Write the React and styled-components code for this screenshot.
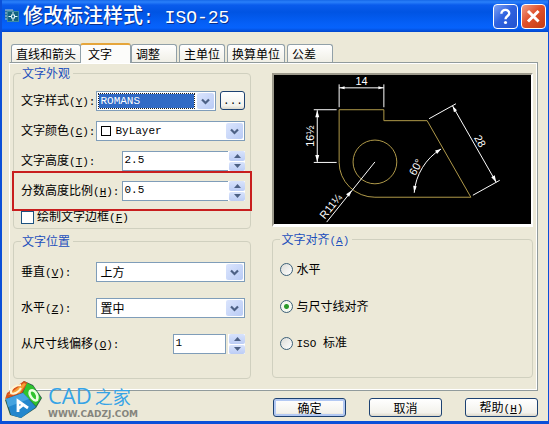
import React, { useState } from 'react'
import styled, { createGlobalStyle, css } from 'styled-components'

const tabs = ['直线和箭头', '文字', '调整', '主单位', '换算单位', '公差']

function App() {
  const [activeTab, setActiveTab] = useState('文字');
  const [style, setStyle] = useState('ROMANS');
  const [color, setColor] = useState('ByLayer');
  const [height, setHeight] = useState('2.5');
  const [fraction, setFraction] = useState('0.5');
  const [frame, setFrame] = useState(false);
  const [vertical, setVertical] = useState('上方');
  const [horizontal, setHorizontal] = useState('置中');
  const [offset, setOffset] = useState('1');
  const [align, setAlign] = useState('line');

  return (
    <>
      <GlobalStyle />
      <Dialog>
        <TitleBar>
          <AppIcon />
          <Title>修改标注样式<TitleLatin>: ISO-25</TitleLatin></Title>
          <CaptionButton aria-label="?">
            <svg width="25" height="25" viewBox="0 0 25 25">
              <path d="M8 9.5C8 3.800 17 4 16.500 9.500C16.200 12 12.500 12 12.500 15.500" fill="none" stroke="#fff" strokeWidth="2.600" />
              <circle cx="12.500" cy="19" r="1.700" fill="#fff" />
            </svg>
          </CaptionButton>
          <CaptionButton $close aria-label="×">
            <svg width="25" height="25" viewBox="0 0 25 25">
              <path d="M6.500 6.500L18 18M18 6.500L6.500 18" stroke="#fff" strokeWidth="3.200" />
            </svg>
          </CaptionButton>
        </TitleBar>

        <Body>
          <TabList role="tablist">
            {tabs.map((tab) => (
              <Tab
                key={tab}
                role="tab"
                aria-selected={tab === activeTab}
                $active={tab === activeTab}
                onClick={() => setActiveTab(tab)}
              >
                {tab}
              </Tab>
            ))}
          </TabList>

          <Panel role="tabpanel">
            <LeftColumn>
              <Group>
                <Legend>文字外观</Legend>
                <AppearanceRows>
                  <Row>
                    <FieldLabel htmlFor="style">文字样式<Key k="Y" /></FieldLabel>
                    <StyleFields>
                      <Combo id="style" value={style} options={['ROMANS', 'Standard']} onChange={setStyle} latin selected />
                      <MoreButton>...</MoreButton>
                    </StyleFields>
                  </Row>
                  <Row>
                    <FieldLabel htmlFor="color">文字颜色<Key k="C" /></FieldLabel>
                    <WideField>
                      <Combo id="color" value={color} options={['ByLayer', 'ByBlock']} onChange={setColor} latin swatch />
                    </WideField>
                  </Row>
                  <Row>
                    <FieldLabel htmlFor="height">文字高度<Key k="T" /></FieldLabel>
                    <NumberField>
                      <Spinner id="height" value={height} onChange={setHeight} />
                    </NumberField>
                  </Row>
                  <Row>
                    <FieldLabel htmlFor="fraction">分数高度比例<Key k="H" /></FieldLabel>
                    <NumberField>
                      <Spinner id="fraction" value={fraction} onChange={setFraction} />
                    </NumberField>
                    <Highlight />
                  </Row>
                  <CheckLabel>
                    <CheckBox type="checkbox" checked={frame} onChange={(e) => setFrame(e.target.checked)} />
                    <span>绘制文字边框<Key k="F" plain /></span>
                  </CheckLabel>
                </AppearanceRows>
              </Group>

              <Group>
                <Legend>文字位置</Legend>
                <PlacementRows>
                  <Row>
                    <FieldLabel htmlFor="vertical">垂直<Key k="V" /></FieldLabel>
                    <WideField>
                      <Combo id="vertical" value={vertical} options={['上方', '置中', '外部']} onChange={setVertical} />
                    </WideField>
                  </Row>
                  <Row>
                    <FieldLabel htmlFor="horizontal">水平<Key k="Z" /></FieldLabel>
                    <WideField>
                      <Combo id="horizontal" value={horizontal} options={['置中', '第一条尺寸界线']} onChange={setHorizontal} />
                    </WideField>
                  </Row>
                  <Row>
                    <FieldLabel htmlFor="offset">从尺寸线偏移<Key k="O" /></FieldLabel>
                    <OffsetField>
                      <Spinner id="offset" value={offset} onChange={setOffset} boxed />
                    </OffsetField>
                  </Row>
                </PlacementRows>
              </Group>
            </LeftColumn>

            <RightColumn>
              <Preview>
                <Drawing />
              </Preview>
              <Group>
                <Legend>文字对齐<Key k="A" plain /></Legend>
                <AlignRows>
                  <RadioLabel>
                    <Radio type="radio" name="align" checked={align === 'horizontal'} onChange={() => setAlign('horizontal')} />
                    水平
                  </RadioLabel>
                  <RadioLabel>
                    <Radio type="radio" name="align" checked={align === 'line'} onChange={() => setAlign('line')} />
                    与尺寸线对齐
                  </RadioLabel>
                  <RadioLabel>
                    <Radio type="radio" name="align" checked={align === 'iso'} onChange={() => setAlign('iso')} />
                    <span><Latin>ISO </Latin>标准</span>
                  </RadioLabel>
                </AlignRows>
              </Group>
            </RightColumn>
          </Panel>

          <Footer>
            <PushButton $primary>确定</PushButton>
            <PushButton>取消</PushButton>
            <PushButton>帮助<Key k="H" plain /></PushButton>
          </Footer>
          <Watermark>
            <CubeLogo />
            <div>
              <Brand>CAD<BrandHan>之家</BrandHan></Brand>
              <BrandUrl>WWW.CADZJ.COM</BrandUrl>
            </div>
          </Watermark>
        </Body>
      </Dialog>
    </>
  )
}

function Key({ k, plain }) {
  return <Latin>(<u>{k}</u>){plain ? '' : ':'}</Latin>
}

function Combo({ id, value, options, onChange, latin, selected, swatch }) {
  return (
    <ComboBox>
      {swatch && <Swatch />}
      <Select id={id} value={value} onChange={(e) => onChange(e.target.value)} $latin={latin} $selected={selected}>
        {options.map((option) => <option key={option}>{option}</option>)}
      </Select>
      <DropArrow>
        <svg width="9" height="7" viewBox="0 0 9 7">
          <path d="M1 1.500L4.500 5L8 1.500" fill="none" stroke="#4d6185" strokeWidth="2.200" />
        </svg>
      </DropArrow>
    </ComboBox>
  )
}

function Spinner({ id, value, onChange, boxed }) {
  const step = (delta) => onChange(String(Number((Number(value) + delta).toFixed(1))));
  return (
    <>
      <NumberInput id={id} value={value} onChange={(e) => onChange(e.target.value)} $boxed={boxed} />
      <Arrows>
        <ArrowButton aria-label="+" onClick={() => step(0.5)}>
          <svg width="7" height="4" viewBox="0 0 7 4"><path d="M0 4L3.500 0L7 4Z" fill="#4d6185" /></svg>
        </ArrowButton>
        <ArrowButton aria-label="-" onClick={() => step(-0.5)}>
          <svg width="7" height="4" viewBox="0 0 7 4"><path d="M0 0L3.500 4L7 0Z" fill="#4d6185" /></svg>
        </ArrowButton>
      </Arrows>
    </>
  )
}

function AppIcon() {
  return (
    <svg width="16" height="16" viewBox="0 0 16 16">
      <path d="M1 2H10V4H3V11H1Z" fill="#2f6f9c" />
      <path d="M1 2H9M1 5H3M1 8H3M1 11H3" stroke="#a9cbd8" />
      <rect x="3.500" y="3.500" width="11" height="10" fill="#14637f" stroke="#3c8ba4" />
      <path d="M9 4V13M4.500 8.500H13.500" stroke="#e8f7fa" />
      <rect x="7.500" y="7" width="3" height="3" fill="#14637f" stroke="#d5eef4" />
    </svg>
  )
}

// sample part with its dimensions
function Drawing() {
  return (
    <DrawingSvg viewBox="0 0 258 149">
      <g fill="none" stroke="#b09a4a">
        <path d="M65.500 87.500V34.500H110.500V45.500H154L198 122.500H101.500A36 35 0 0 1 65.500 87.500Z" />
        <circle cx="101.500" cy="87" r="22" />
      </g>
      <g fill="none" stroke="#fff">
        <path d="M65.500 9V32M110.500 9V32M65.500 12.500H110.500" />
        <path d="M40 34.500H63M40 87.500H63M43.500 35V87" />
        <path d="M156 43.500L183 28.500M200 120.500L227 105.500M179.500 30.500L223.500 107.500" />
        <path d="M141 118A57 57 0 0 1 168 74" />
        <path d="M101.500 87L53 147.500" />
      </g>
      <g fill="#fff">
        <path d="M66 12.500L71 11V14ZM110 12.500L105 11V14Z" />
        <path d="M43.500 35L41.500 42H45.500ZM43.500 87L41.500 80H45.500Z" />
        <path d="M179.500 30.500L181 37L184 35ZM223.500 107.500L218.500 102.500L222 100.500Z" />
        <path d="M141 118L140 111L143.500 111.500ZM168 74L162 75.500L164 79Z" />
        <path d="M78.500 115.500L75.500 122L72.500 119.500Z" />
      </g>
      <g fill="#fff" textAnchor="middle">
        <text x="88" y="9.500">14</text>
        <text transform="translate(40 61) rotate(-90)">16½</text>
        <text transform="translate(204 68) rotate(60)">28</text>
        <text transform="translate(146 94) rotate(-62)">60°</text>
        <text transform="translate(60 134) rotate(-51)">R11¼</text>
      </g>
    </DrawingSvg>
  )
}

function CubeLogo() {
  return (
    <svg width="37" height="38" viewBox="0 0 37 38">
      <path d="M0 19L19 0L28 4L37 17L31 27L16 37L5 34Z" fill="#2c5a4a" />
      <path d="M0 18L2 12L19 0L23 2L17 12Z" fill="#d9531c" />
      <path d="M3 14L19 2L21 3L15 12Z" fill="#f6a035" />
      <path d="M16 4C10 4 5 8 6 12C9 14 14 11 16 7" fill="none" stroke="#fff3d0" strokeWidth="2" />
      <path d="M22 2L28 5L36 17L31 25L18 12Z" fill="#2fc32e" />
      <path d="M25 10C29 7 34 14 32 19C29 21 23 14 25 10Z" fill="none" stroke="#e9ffdf" strokeWidth="2.500" />
      <path d="M1 18L18 12L31 26L16 37L6 34Z" fill="#2487cd" />
      <path d="M1 18L18 12L24 18L3 26Z" fill="#46a4e0" />
      <path d="M13 31L13 20L23 27M13 28L18 24" fill="none" stroke="#fff" strokeWidth="2.800" />
    </svg>
  )
}

const GlobalStyle = createGlobalStyle`
  * {
    box-sizing: border-box;
  }

  body {
    margin: 0;
    background: #ece9d8;
    color: #000;
    font: 12px/14px "Noto Sans CJK SC", sans-serif;
  }

  button, input, select {
    font: inherit;
    color: inherit;
  }

  button {
    cursor: pointer;
  }
`

const Dialog = styled.div`
  background: #ece9d8;
  border: solid #0b4fd8;
  border-width: 0 1px 3px 2px;
`

const TitleBar = styled.header`
  height: 32px;
  display: flex;
  align-items: center;
  gap: 3px;
  padding: 0 2px;
  background: linear-gradient(#1668e8 0, #2a80fa 2px, #0a5cec 5px, #0054e3 12px, #0560f8 24px, #0662fc 28px, #0046cc 32px);
`

const Title = styled.h1`
  flex: 1;
  margin: 0;
  color: #fff;
  font-size: 20px;
  font-weight: 500;
  line-height: 24px;
  white-space: pre;
  text-shadow: 1px 1px #0a2f8c;
`

const TitleLatin = styled.span`
  font-family: "Liberation Mono", monospace;
  font-size: 18px;
`

const CaptionButton = styled.button`
  width: 25px;
  height: 25px;
  padding: 0;
  border: 1px solid #fff;
  border-radius: 4px;
  background: linear-gradient(135deg, #7fa2f4, #2f62e0 45%, #2253cf);
  display: flex;
  align-items: center;
  justify-content: center;

  ${(props) => props.$close && css`
    background: linear-gradient(135deg, #f0a08a, #e0512c 45%, #c33c14);
  `}
`

const Body = styled.main`
  position: relative;
  padding: 11px 10px 4px 7px;
`

const TabList = styled.div`
  position: relative;
  display: flex;
  align-items: flex-end;
  gap: 2px;
  height: 20px;
  margin-bottom: -1px;
  padding-left: 2px;
`

const Tab = styled.button`
  min-width: 46px;
  height: 18px;
  margin-bottom: 1px;
  padding: 0 4px;
  border: 1px solid #91a0a8;
  border-bottom: 0;
  border-radius: 3px 3px 0 0;
  background: linear-gradient(#fff, #f0efe6);
  line-height: 17px;
  text-align: left;
  white-space: nowrap;

  ${(props) => props.$active && css`
    min-width: 51px;
    height: 20px;
    margin: 0 -2px 0 -3px;
    padding: 0 7px 2px;
    border-top: 2px solid #e5a53a;
    background: #fcfcfa;
  `}
`

const Panel = styled.section`
  display: grid;
  grid-template-columns: 238fr 260fr;
  gap: 21px;
  padding: 3px 4px 11px 3px;
  border: 1px solid #919b9c;
  border-left-color: #fff;
  box-shadow: inset 0 1px #fff, inset -1px -1px #fff;
`

const LeftColumn = styled.div`
  display: flex;
  flex-direction: column;
  gap: 5px;
`

const RightColumn = styled(LeftColumn)`
  padding-top: 7px;
`

const Group = styled.fieldset`
  min-width: 0;
  margin: 0;
  padding: 0 5px 0 7px;
  border: 1px solid #d0d0bf;
  border-radius: 4px;
`

const Legend = styled.legend`
  height: 14px;
  padding: 0 3px 0 1px;
  color: #1c4fbc;
`

const Rows = styled.div`
  display: flex;
  flex-direction: column;
`

const AppearanceRows = styled(Rows)`
  gap: 10px;
  padding: 11px 0 5px;
`

const PlacementRows = styled(Rows)`
  gap: 16px;
  padding: 14px 0 24px;
`

const AlignRows = styled(Rows)`
  gap: 17px;
  padding: 13px 0 24px;
`

const Row = styled.div`
  position: relative;
  display: flex;
  align-items: center;
  justify-content: space-between;
  height: 20px;
`

const FieldLabel = styled.label`
  white-space: nowrap;
`

const Latin = styled.span`
  font-family: "Liberation Mono", monospace;
  font-size: 11px;
  white-space: pre;
`

const WideField = styled.div`
  display: flex;
  width: 149px;
  height: 20px;
`

const StyleFields = styled(WideField)`
  gap: 4px;
`

const NumberField = styled(WideField)`
  width: 123px;
`

const OffsetField = styled(WideField)`
  width: 72px;
`

const ComboBox = styled.div`
  flex: 1;
  min-width: 0;
  display: flex;
  align-items: center;
  padding: 1px;
  border: 1px solid #7f9db9;
  background: #fff;
`

const Select = styled.select`
  appearance: none;
  flex: 1;
  min-width: 0;
  height: 14px;
  margin: 0 3px 0 1px;
  padding: 0 1px;
  border: 0;
  border-radius: 0;
  outline: 0;
  background: transparent;
  line-height: 14px;

  ${(props) => props.$latin && css`
    font-family: "Liberation Mono", monospace;
    font-size: 11px;
  `}

  ${(props) => props.$selected && css`
    background: #316ac5;
    color: #fff;
    outline: 1px dotted #222;
  `}
`

const Swatch = styled.span`
  width: 10px;
  height: 10px;
  margin: 0 2px 0 3px;
  border: 1px solid #000;
`

const DropArrow = styled.span`
  width: 17px;
  height: 16px;
  border-radius: 2px;
  background: linear-gradient(135deg, #dbe5fd, #b9cbf5);
  display: flex;
  align-items: center;
  justify-content: center;
  pointer-events: none;
`

const NumberInput = styled.input`
  flex: 1;
  min-width: 0;
  height: 20px;
  padding: 0 1px 3px;
  border: 1px solid #7f9db9;
  border-right-width: ${(props) => (props.$boxed ? '1px' : '0')};
  margin-right: ${(props) => (props.$boxed ? '2px' : '0')};
  border-radius: 0;
  background: #fff;
  font-family: "Liberation Mono", monospace;
  font-size: 11px;
`

const Arrows = styled.div`
  width: 17px;
  display: flex;
  flex-direction: column;
  gap: 1px;
  padding: 0 0 0 1px;
  background: #fff;
`

const ArrowButton = styled.button`
  flex: 1;
  min-height: 0;
  padding: 0;
  border: 0;
  border-radius: 2px;
  background: linear-gradient(#d8e3fc, #bccdf5);
  display: flex;
  align-items: center;
  justify-content: center;
`

const Button = styled.button`
  height: 19px;
  padding: 0;
  border: 1px solid #1d4272;
  border-radius: 3px;
  background: linear-gradient(#fff, #f3f2ec 80%, #dcd8cb);
  line-height: 16px;
`

const MoreButton = styled(Button)`
  width: 25px;
  font-family: "Liberation Mono", monospace;
  font-size: 11px;
`

const PushButton = styled(Button)`
  width: 73px;

  ${(props) => props.$primary && css`
    box-shadow: inset 0 0 0 2px #b3c9f3;
  `}
`

const Highlight = styled.div`
  position: absolute;
  inset: -10px -7px -10px -9px;
  border: 2px solid #c81e1e;
  pointer-events: none;
`

const CheckLabel = styled.label`
  display: flex;
  align-items: center;
  gap: 3px;
  height: 12px;
`

const CheckBox = styled.input`
  appearance: none;
  width: 13px;
  height: 13px;
  margin: 0;
  border: 1px solid #1d5280;
  background: #fff;

  &:checked {
    background: #21a121;
    box-shadow: inset 0 0 0 2px #fff;
  }
`

const RadioLabel = styled.label`
  display: flex;
  align-items: center;
  gap: 3px;
  height: 20px;
`

const Radio = styled.input`
  appearance: none;
  width: 13px;
  height: 13px;
  margin: 0;
  border: 1px solid #3c6078;
  border-radius: 50%;
  background: linear-gradient(135deg, #dcdcd7, #fff);

  &:checked {
    background: radial-gradient(circle, #2a9a2a 2px, #f4f8f0 3px);
  }
`

const Preview = styled.div`
  height: 154px;
  border: solid;
  border-width: 2px 2px 3px 2px;
  border-color: #9d9a8c #fff #fff #9d9a8c;
  background: #000;
`

const DrawingSvg = styled.svg`
  display: block;
  width: 100%;
  height: 100%;
  font: 11px "Liberation Sans", sans-serif;
`

const Footer = styled.footer`
  display: flex;
  justify-content: flex-end;
  gap: 23px;
  padding-top: 7px;
`

const Watermark = styled.div`
  position: absolute;
  left: 3px;
  bottom: 2px;
  display: flex;
  align-items: center;
  gap: 6px;
  pointer-events: none;
`

const Brand = styled.div`
  color: #35a3e6;
  font: 22px/27px "Open Sans", sans-serif;
  white-space: nowrap;
`

const BrandHan = styled.span`
  margin-left: 3px;
  font: 18px/22px "Noto Sans CJK SC", sans-serif;
`

const BrandUrl = styled.div`
  color: #85857d;
  font: bold 9px/10px "DejaVu Sans", sans-serif;
`

export default App
